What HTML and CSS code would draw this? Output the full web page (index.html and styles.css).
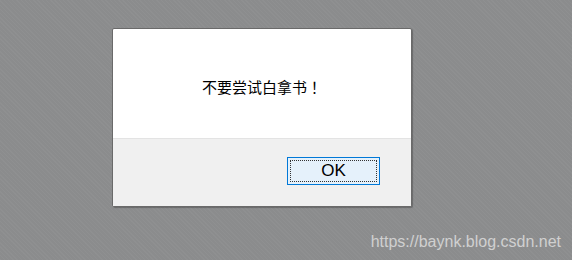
FILE: index.html
```html
<!DOCTYPE html>
<html>
<head>
<meta charset="utf-8">
<link rel="stylesheet" href="styles.css">
</head>
<body>
<div class="page">
  <div class="dialog">
    <div class="dialog-body">
      <p class="message">不要尝试白拿书<span class="punct">！</span></p>
    </div>
    <div class="dialog-footer">
      <button class="ok-btn"><span class="focus-ring">OK</span></button>
    </div>
  </div>
  <div class="watermark">https://baynk.blog.csdn.net</div>
</div>
</body>
</html>
```

FILE: styles.css
```css
html, body {
  margin: 0;
  padding: 0;
}
body {
  width: 572px;
  height: 260px;
  background-color: #8b8c8d;
  background-image: repeating-linear-gradient(45deg, rgba(255,255,255,0.03) 0 1px, transparent 1px 3px);
  overflow: hidden;
}
.page {
  display: flex;
  flex-direction: column;
  padding-top: 28px;
  height: 232px;
}
.dialog {
  margin-left: 112px;
  width: 298px;
  border: 1px solid #6a6a6a;
  border-radius: 2px;
  background: #ffffff;
  box-sizing: content-box;
  box-shadow: 1px 1px 1px rgba(0, 0, 0, 0.25);
}
.dialog-body {
  height: 110px;
  box-sizing: border-box;
  padding-top: 48px;
  border-bottom: 1px solid #e3e3e3;
}
.message {
  margin: 0;
  font-family: "Noto Sans CJK SC", "Liberation Sans", sans-serif;
  font-size: 15px;
  line-height: 20px;
  color: #000;
  text-align: center;
  text-spacing-trim: space-all;
}
.punct {
  font-family: "Noto Sans CJK JP", "Noto Sans CJK SC", sans-serif;
}
.dialog-footer {
  height: 67px;
  background: #f0f0f0;
  display: flex;
  justify-content: flex-end;
  align-items: flex-start;
  padding: 18px 31px 0 0;
  box-sizing: border-box;
}
.ok-btn {
  width: 93px;
  height: 28px;
  padding: 2px;
  margin: 0;
  border: 1px solid #0078d7;
  background: #e5f1fb;
  font-family: "Liberation Sans", sans-serif;
  font-size: 17px;
  color: #000;
  box-sizing: border-box;
  display: flex;
}
.focus-ring {
  flex: 1;
  border: 1px dotted #333;
  display: flex;
  align-items: center;
  justify-content: center;
  line-height: 18px;
}
.watermark {
  margin-top: auto;
  align-self: flex-end;
  margin-right: 11px;
  margin-bottom: 9px;
  font-family: "Liberation Sans", sans-serif;
  font-size: 16px;
  line-height: 18px;
  color: #d0d0d0;
}
```
